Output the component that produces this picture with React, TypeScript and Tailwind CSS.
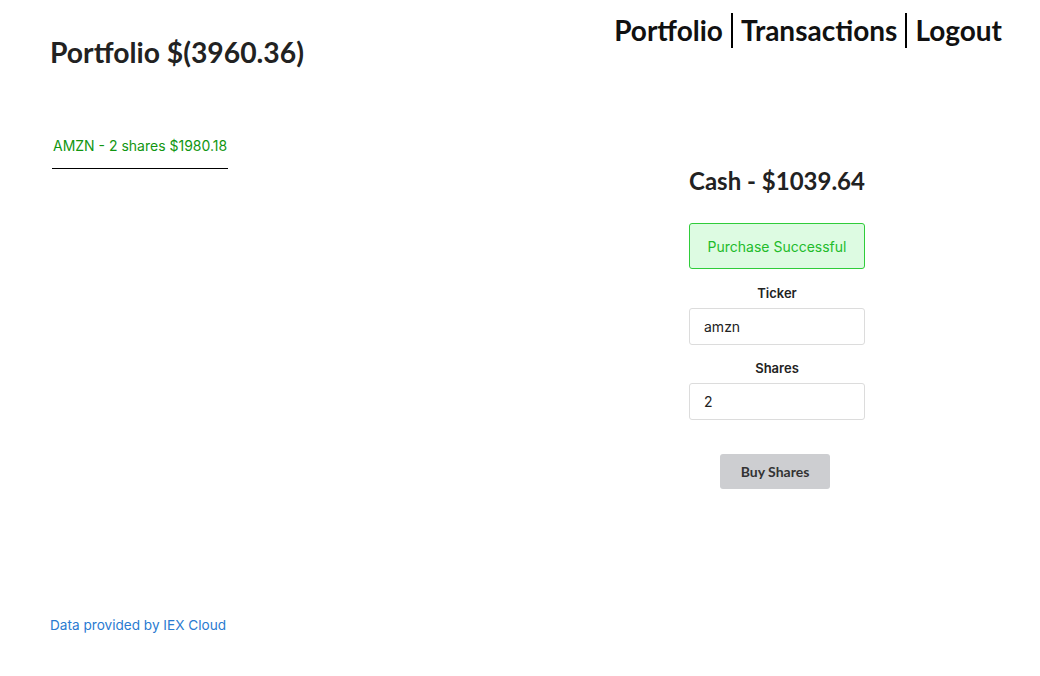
import { useState } from 'react'

const lato = "font-['Lato','Liberation_Sans',sans-serif]"
const inter = "font-['Inter','Liberation_Sans',sans-serif]"

export default function App() {
  const [ticker, setTicker] = useState('amzn')
  const [shares, setShares] = useState('2')

  return (
    <div className={`min-h-[676px] w-[1040px] bg-white text-[#222] ${inter} flex flex-col`}>
      {/* Header */}
      <div className="flex justify-between items-start pl-[50px] pr-[38px]">
        <h2 className={`${lato} font-bold text-[28.3px] leading-[34px] mt-[35px] text-[#222]`}>
          Portfolio $(3960.36)
        </h2>
        <nav className={`${lato} font-bold text-[28px] leading-[35px] mt-[13px] flex items-stretch text-[#111]`}>
          <a className="pr-[8px]">Portfolio</a>
          <a className="px-[8px] border-l-2 border-black">Transactions</a>
          <a className="pl-[8px] border-l-2 border-black">Logout</a>
        </nav>
      </div>

      {/* Main */}
      <div className="flex pl-[52px] mt-[68px]">
        <div className="w-[548px]">
          <ul>
            <li className="w-[176px] border-b border-black pb-[14px] pl-[1px] text-[14px] leading-[17px] text-[#119611]">
              AMZN - 2 shares $1980.18
            </li>
          </ul>
        </div>

        <div className="w-[354px] flex flex-col items-center pt-[30px]">
          <h3 className={`${lato} font-bold text-[24px] leading-[28px] text-[#222]`}>Cash - $1039.64</h3>

          <div className="mt-[28px] w-[176px] h-[46px] rounded-[3px] border border-[#2fcc3a] bg-[#ddfbe2] flex items-center justify-center text-[14px] text-[#22bb2a]">
            Purchase Successful
          </div>

          <form className="flex flex-col items-center mt-[16px]" onSubmit={(e) => e.preventDefault()}>
            <label className="text-[13px] font-semibold leading-[16px] text-[#222]">Ticker</label>
            <input
              value={ticker}
              onChange={(e) => setTicker(e.target.value)}
              className="mt-[7px] w-[176px] h-[37px] rounded-[3px] border border-[#dcdcdc] px-[14px] text-[14px] text-[#222] outline-none"
            />
            <label className="mt-[15px] text-[13px] font-semibold leading-[16px] text-[#222]">Shares</label>
            <input
              value={shares}
              onChange={(e) => setShares(e.target.value)}
              className="mt-[7px] w-[176px] h-[37px] rounded-[3px] border border-[#dcdcdc] px-[14px] text-[14px] text-[#222] outline-none"
            />
            <button
              type="submit"
              className={`${lato} mt-[34px] mr-[4px] w-[110px] h-[35px] rounded-[3px] bg-[#cdced1] font-bold text-[14px] text-[#333]`}
            >
              Buy Shares
            </button>
          </form>
        </div>
      </div>

      {/* Footer */}
      <div className="pl-[50px] mt-[123px]">
        <a className="text-[13.6px] leading-[17px] text-[#2a7bd1]">Data provided by IEX Cloud</a>
      </div>
    </div>
  )
}
